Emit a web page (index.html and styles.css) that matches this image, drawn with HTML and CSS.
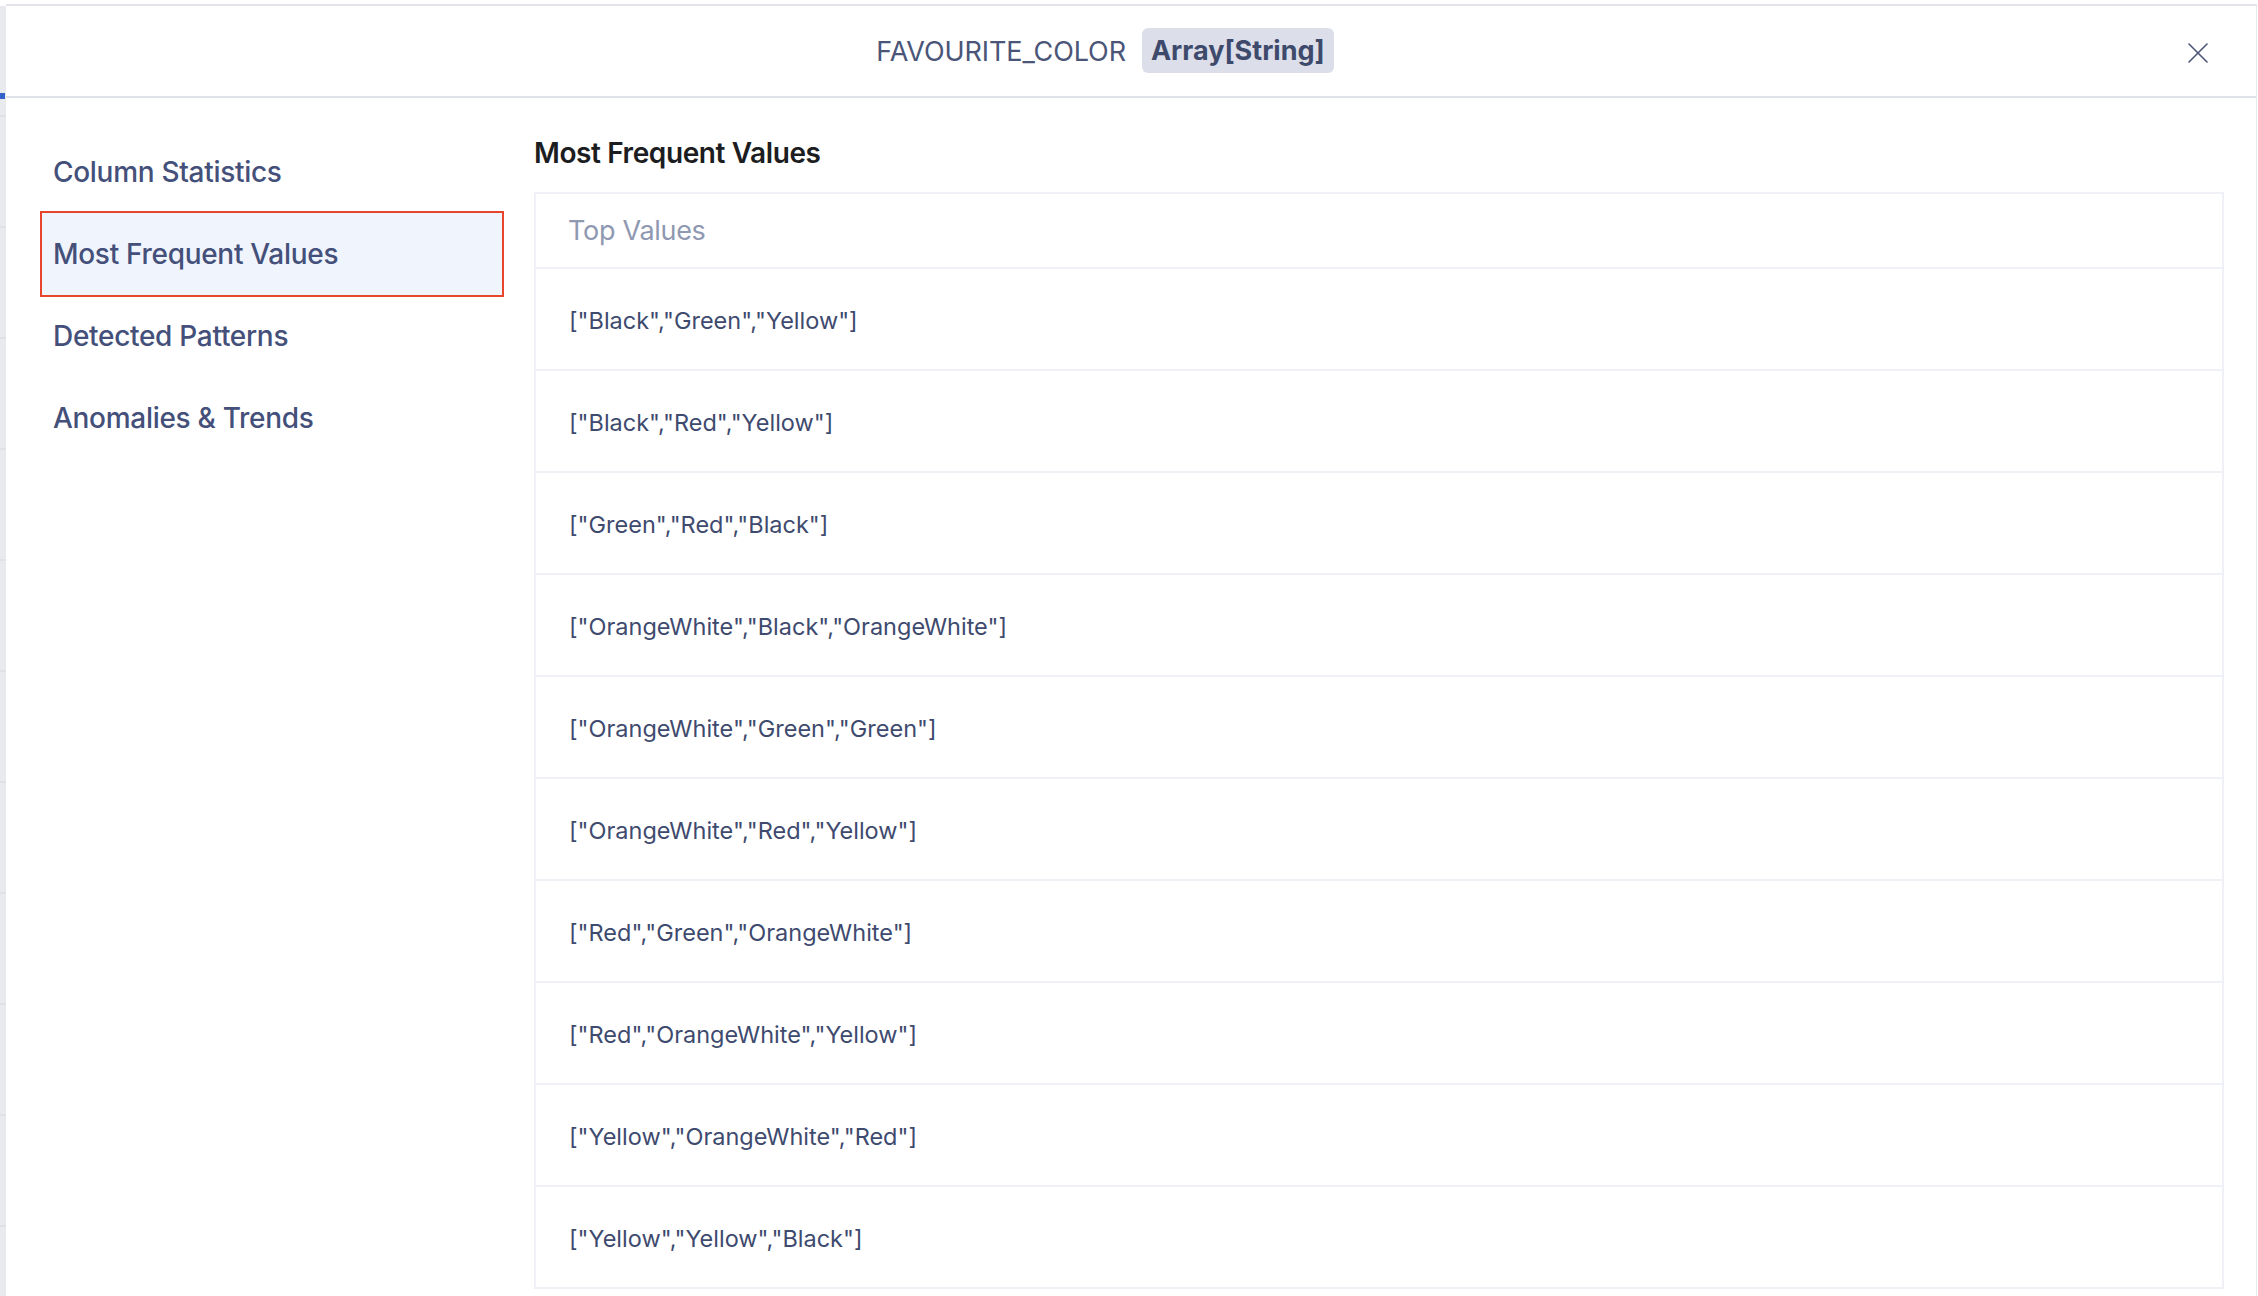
FILE: index.html
```html
<!DOCTYPE html>
<html lang="en">
<head>
    <meta charset="UTF-8">
    <meta name="viewport" content="width=device-width, initial-scale=1.0">
    <title>FAVOURITE_COLOR - Column Profile</title>
    <link rel="stylesheet" href="styles.css">
</head>
<body>
    <div class="backdrop">
        <span class="backdrop-mark"></span>
    </div>
    <div class="modal">
        <div class="modal-header">
            <div class="modal-title">
                <span class="column-name">FAVOURITE_COLOR</span>
                <span class="type-badge">Array[String]</span>
            </div>
            <button class="close-button" aria-label="Close">
                <svg width="20" height="20" viewBox="0 0 20 20" fill="none">
                    <path d="M1 1L19 19M19 1L1 19" stroke="#4a5578" stroke-width="1.6" stroke-linecap="round"/>
                </svg>
            </button>
        </div>
        <div class="modal-body">
            <nav class="side-nav">
                <a class="nav-item">Column Statistics</a>
                <a class="nav-item selected">Most Frequent Values</a>
                <a class="nav-item">Detected Patterns</a>
                <a class="nav-item">Anomalies &amp; Trends</a>
            </nav>
            <section class="content">
                <h2>Most Frequent Values</h2>
                <div class="values-table">
                    <div class="table-head">Top Values</div>
                    <div class="table-row">["Black","Green","Yellow"]</div>
                    <div class="table-row">["Black","Red","Yellow"]</div>
                    <div class="table-row">["Green","Red","Black"]</div>
                    <div class="table-row">["OrangeWhite","Black","OrangeWhite"]</div>
                    <div class="table-row">["OrangeWhite","Green","Green"]</div>
                    <div class="table-row">["OrangeWhite","Red","Yellow"]</div>
                    <div class="table-row">["Red","Green","OrangeWhite"]</div>
                    <div class="table-row">["Red","OrangeWhite","Yellow"]</div>
                    <div class="table-row">["Yellow","OrangeWhite","Red"]</div>
                    <div class="table-row">["Yellow","Yellow","Black"]</div>
                </div>
            </section>
        </div>
    </div>
</body>
</html>
```

FILE: styles.css
```css
html, body {
    height: 100%;
}

body {
    margin: 0;
    font-family: Inter, 'Noto Sans', sans-serif;
    background: #ffffff;
    color: #44507a;
    overflow: hidden;
    display: flex;
}

/* page behind the dialog, only a sliver shows on the left */
.backdrop {
    width: 6px;
    flex-shrink: 0;
    margin-top: 6px;
    background: repeating-linear-gradient(to bottom, #e9eaee 0, #e9eaee 109px, #dfe1e6 109px, #dfe1e6 111px);
    position: relative;
}

.backdrop-mark {
    position: absolute;
    left: 0;
    top: 87px;
    width: 5px;
    height: 6px;
    background: #3461c9;
}

.modal {
    flex: 1;
    margin: 4px 1px 0 0;
    background: #ffffff;
    border-top: 2px solid #e2e4e9;
    border-right: 1px solid #e6e8ec;
    display: flex;
    flex-direction: column;
    min-width: 0;
}

.modal-header {
    height: 90px;
    border-bottom: 2px solid #dfe2e7;
    display: grid;
    grid-template-columns: 1fr auto;
    align-items: center;
    padding-left: 48px;
}

.modal-title {
    display: flex;
    justify-content: center;
    align-items: center;
    gap: 16px;
}

.column-name {
    font-size: 27px;
    color: #4a5578;
    letter-spacing: -0.1px;
}

.type-badge {
    background: #dcdfe9;
    color: #3e4a6c;
    font-weight: 700;
    font-size: 27px;
    padding: 0 9px;
    height: 45px;
    line-height: 45px;
    border-radius: 6px;
    margin-top: -2px;
}

.close-button {
    width: 20px;
    height: 20px;
    padding: 0;
    margin: 4px 48px 0 32px;
    border: none;
    background: none;
    cursor: pointer;
    display: flex;
}

.modal-body {
    flex: 1;
    display: flex;
    gap: 32px;
    padding-right: 32px;
}

.side-nav {
    width: 460px;
    flex-shrink: 0;
    padding: 33px 0 0 36px;
    display: flex;
    flex-direction: column;
}

.nav-item {
    height: 82px;
    display: flex;
    align-items: center;
    padding-left: 11px;
    font-size: 28px;
    font-weight: 500;
    color: #44507a;
    letter-spacing: -0.3px;
    cursor: pointer;
}

.nav-item.selected {
    background: #eff4fd;
    outline: 2.5px solid #e8462c;
}

.content {
    flex: 1;
    padding-top: 35px;
    min-width: 0;
}

.content h2 {
    margin: 0 0 19px;
    font-size: 28px;
    line-height: 40px;
    font-weight: 600;
    color: #1c1d21;
    letter-spacing: -0.4px;
}

.values-table {
    border: 2px solid #f0f1f6;
    border-bottom: none;
}

.table-head {
    height: 73px;
    display: flex;
    align-items: center;
    padding-left: 32px;
    border-bottom: 2px solid #f0f1f6;
    font-size: 27px;
    color: #8f98b1;
    letter-spacing: -0.3px;
}

.table-row {
    box-sizing: border-box;
    height: 102px;
    display: flex;
    align-items: center;
    padding: 2px 0 0 33px;
    border-bottom: 2px solid #f0f1f6;
    font-size: 23.5px;
    color: #3e4a6e;
}
```
